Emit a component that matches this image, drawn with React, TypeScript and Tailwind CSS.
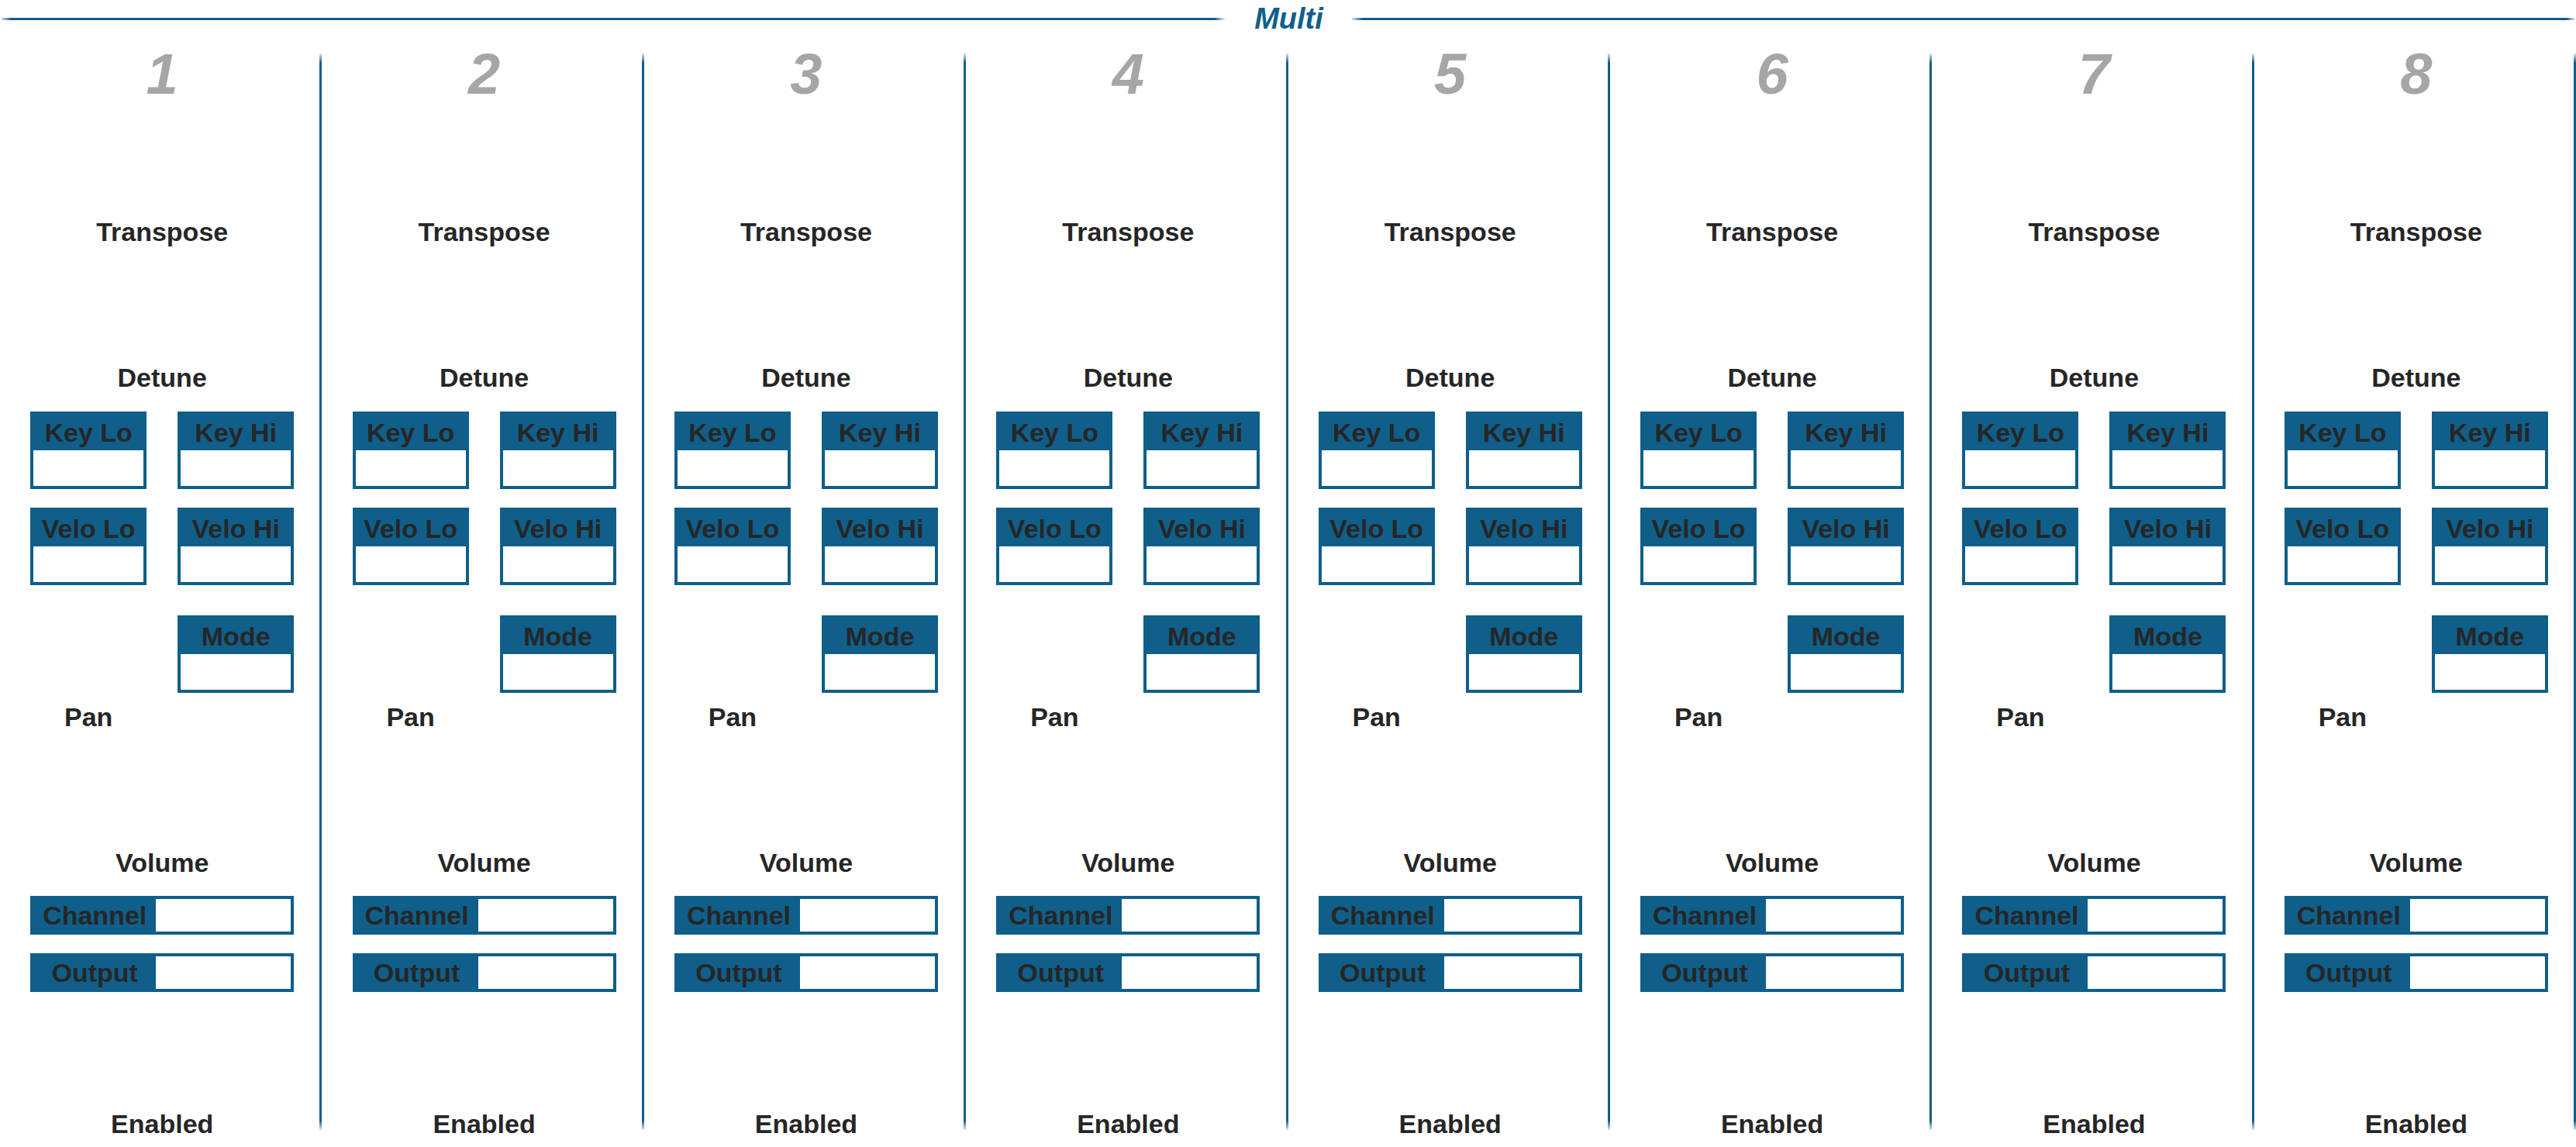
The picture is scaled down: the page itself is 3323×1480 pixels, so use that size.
import React from "react"

function FieldBox({ label }: { label: string }) {
  return (
    <div className="w-[150px] h-[100px] border-4 border-[#0f5f8a] flex flex-col shrink-0">
      <div className="h-[46px] bg-[#0f5f8a] text-center leading-[46px] whitespace-nowrap">{label}</div>
      <div className="flex-1 bg-white" />
    </div>
  )
}

function RowBox({ label }: { label: string }) {
  return (
    <div className="h-[50px] border-4 border-[#0f5f8a] flex">
      <div className="w-[158px] bg-[#0f5f8a] text-center leading-[42px] whitespace-nowrap">{label}</div>
      <div className="flex-1 bg-white" />
    </div>
  )
}

function Part({ n }: { n: number }) {
  return (
    <div className="flex h-[1389px] items-start">
      <div className="flex-1 min-w-0 pl-[6px] flex flex-col items-center text-[34px] leading-[40px] font-bold text-[#262626]">
        <div className="-mt-[10px] h-[74px] text-[74px] leading-[74px] italic text-[#a6a6a6]">{n}</div>
        <div className="mt-[146px]">Transpose</div>
        <div className="mt-[148px]">Detune</div>
        <div className="mt-[24px] w-[340px] flex justify-between">
          <FieldBox label="Key Lo" />
          <FieldBox label="Key Hi" />
        </div>
        <div className="mt-[24px] w-[340px] flex justify-between">
          <FieldBox label="Velo Lo" />
          <FieldBox label="Velo Hi" />
        </div>
        <div className="mt-[39px] w-[340px] flex justify-end">
          <FieldBox label="Mode" />
        </div>
        <div className="mt-[11px] w-[340px]">
          <div className="w-[150px] text-center">Pan</div>
        </div>
        <div className="mt-[148px]">Volume</div>
        <div className="mt-[23px] w-[340px]">
          <RowBox label="Channel" />
        </div>
        <div className="mt-[24px] w-[340px]">
          <RowBox label="Output" />
        </div>
        <div className="mt-[150px]">Enabled</div>
      </div>
      <div className="w-[3px] self-stretch bg-[linear-gradient(to_bottom,rgba(15,95,138,0.15),#0f5f8a_12px,#0f5f8a_calc(100%-12px),rgba(15,95,138,0.15))]" />
    </div>
  )
}

export default function App() {
  const parts = [1, 2, 3, 4, 5, 6, 7, 8]
  return (
    <div className="w-[3323px] h-[1480px] bg-white overflow-hidden font-['Liberation_Sans',Arial,sans-serif]">
      <div className="h-[48px] flex items-center">
        <div className="flex-1 h-[3px] ml-[2px] bg-[linear-gradient(to_right,rgba(15,95,138,0.2),#0f5f8a_12px,#0f5f8a_calc(100%-14px),rgba(15,95,138,0))]" />
        <div className="px-[37px] text-[38px] leading-[38px] font-bold italic text-[#0f5f8a]">Multi</div>
        <div className="flex-1 h-[3px] bg-[linear-gradient(to_right,rgba(15,95,138,0.2),#0f5f8a_14px,#0f5f8a_calc(100%-12px),rgba(15,95,138,0))]" />
      </div>
      <div className="grid grid-cols-8 mt-[21px]">
        {parts.map((n) => (
          <Part key={n} n={n} />
        ))}
      </div>
    </div>
  )
}
